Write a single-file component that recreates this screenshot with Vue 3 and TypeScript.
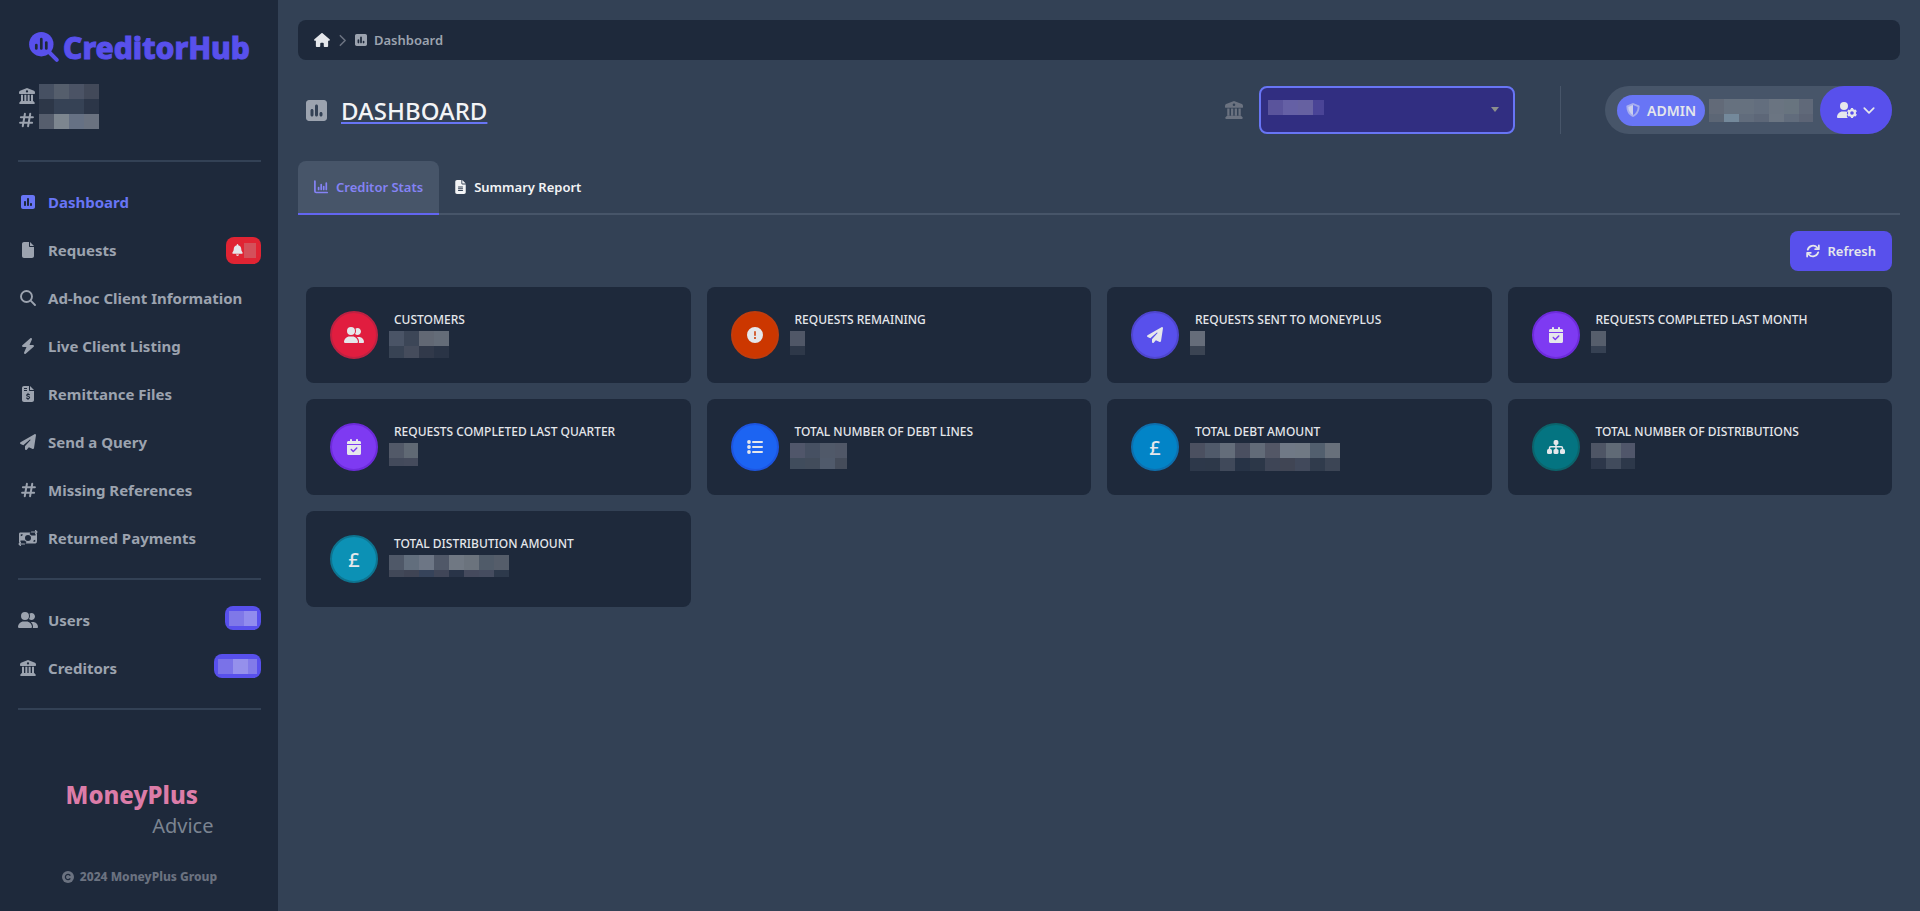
<script setup lang="ts">
import { h, type FunctionalComponent } from 'vue'

interface IconDef {
  w: number
  h: number
  body: string
}

interface MosaicDef {
  w: number
  h: number
  rows: string[][]
}

interface NavItem {
  label: string
  icon: string
  size: number
  active?: boolean
  alert?: MosaicDef
  count?: MosaicDef
}

interface StatCard {
  title: string
  icon?: string
  tone: string
  value: MosaicDef
}

const icons: Record<string, IconDef> = {
  poll: { w: 448, h: 448, body: '<path transform="translate(0 -32)" d="M64 32C28.7 32 0 60.7 0 96L0 416c0 35.3 28.7 64 64 64l320 0c35.3 0 64-28.7 64-64l0-320c0-35.3-28.7-64-64-64L64 32zm64 192c17.700 0 32 14.300 32 32l0 96c0 17.700-14.300 32-32 32s-32-14.300-32-32l0-96c0-17.700 14.300-32 32-32zm64-64c0-17.700 14.300-32 32-32s32 14.300 32 32l0 192c0 17.700-14.300 32-32 32s-32-14.300-32-32l0-192zM320 288c17.700 0 32 14.300 32 32l0 32c0 17.700-14.300 32-32 32s-32-14.300-32-32l0-32c0-17.700 14.300-32 32-32z"/>' },
  bank: { w: 32, h: 32, body: '<path fill-rule="evenodd" d="M16 0 30 5.500Q32 6.500 32 9v1.500q0 1.500-1.500 1.500h-29Q0 12 0 10.500V9Q0 6.500 2 5.500zM16 4.500a2.300 2.300 0 1 0 0 4.600 2.300 2.300 0 0 0 0-4.600z"/><path d="M4 13.500h4V26H4zm6.700 0h4V26h-4zm6.600 0h4V26h-4zm6.700 0h4V26h-4z"/><path d="M3.500 26h25l3 3.500q.5 2.500-1.500 2.500H2q-2 0-1.500-2.500z"/>' },
  hash: { w: 28, h: 30, body: '<path fill="none" stroke="currentColor" stroke-width="3.800" stroke-linecap="round" d="M11 3.500 7 26.500M21 3.500l-4 23M3.500 10H26M2 20h22.500"/>' },
  file: { w: 384, h: 512, body: '<path d="M0 64C0 28.700 28.700 0 64 0L224 0l0 128c0 17.700 14.300 32 32 32l128 0 0 288c0 35.300-28.700 64-64 64L64 512c-35.300 0-64-28.700-64-64L0 64zm384 64l-128 0L256 0 384 128z"/>' },
  fileLines: { w: 384, h: 512, body: '<path fill-rule="evenodd" d="M0 64C0 28.700 28.700 0 64 0L224 0l0 128c0 17.700 14.300 32 32 32l128 0 0 288c0 35.300-28.700 64-64 64L64 512c-35.300 0-64-28.700-64-64L0 64zm384 64l-128 0L256 0 384 128zM112 240a16 16 0 0 0 0 32h160a16 16 0 0 0 0-32zm0 64a16 16 0 0 0 0 32h160a16 16 0 0 0 0-32zm0 64a16 16 0 0 0 0 32h160a16 16 0 0 0 0-32z"/>' },
  invoice: { w: 384, h: 512, body: '<path fill-rule="evenodd" d="M0 64C0 28.700 28.700 0 64 0L224 0l0 128c0 17.700 14.300 32 32 32l128 0 0 288c0 35.300-28.700 64-64 64L64 512c-35.300 0-64-28.700-64-64L0 64zm384 64l-128 0L256 0 384 128zM64 64v32h96V64zm0 64v32h96v-32z"/><path class="cut" fill="none" stroke-width="34" stroke-linecap="round" d="M240 278c-20-12-92-22-92 20 0 44 96 22 96 70 0 42-70 34-100 16M192 232v30M192 400v34"/>' },
  search: { w: 16, h: 16, body: '<g fill="none" stroke="currentColor" stroke-width="1.900" stroke-linecap="round"><circle cx="6.500" cy="6.500" r="5.500"/><path d="m10.700 10.700 4.300 4.300"/></g>' },
  bolt: { w: 384, h: 512, body: '<path transform="translate(-32 0)" d="M349.400 44.600c5.900-13.700 1.500-29.700-10.600-38.500s-28.600-8-39.900 1.800l-256 224c-10 8.800-13.600 22.900-8.900 35.300S50.700 288 64 288l111.500 0L98.600 467.400c-5.900 13.700-1.500 29.700 10.600 38.500s28.600 8 39.900-1.800l256-224c10-8.800 13.600-22.900 8.900-35.300s-16.600-20.700-30-20.700l-111.500 0L349.400 44.600z"/>' },
  plane: { w: 512, h: 512, body: '<path d="M498.100 5.600c10.100 7 15.400 19.100 13.500 31.200l-64 416c-1.500 9.700-7.400 18.200-16 23s-18.900 5.400-28 1.600L284 427.700l-68.500 74.100c-8.900 9.700-22.900 12.900-35.200 8.100S160 493.200 160 480l0-83.600c0-4 1.500-7.800 4.200-10.800L331.800 202.800c5.800-6.300 5.600-16-.4-22s-15.700-6.400-22-.7L106 360.800 17.700 316.600C7.100 311.300 .3 300.700 0 288.900s5.900-22.800 16.100-28.700l448-256c10.700-6.100 23.900-5.500 34 1.400z"/>' },
  transfer: { w: 40, h: 32, body: '<path fill-rule="evenodd" d="M4 5h21l-2 3 4 3h8V8l3-2v16q0 4-3 5H15l2-3-4-3H5v3l-3 2V8q0-3 2-3zM20 10a6 6 0 1 0 0 12 6 6 0 0 0 0-12zM5.500 8.500v4q4 0 4-4zm29 15v-4q-4 0-4 4z"/><path fill="none" stroke="currentColor" stroke-width="2.200" stroke-linecap="round" stroke-linejoin="round" d="M27 4h11m-3-3 3 3-3 3M13 28H2m3-3-3 3 3 3"/>' },
  bell: { w: 448, h: 512, body: '<path d="M224 0c-17.700 0-32 14.300-32 32l0 19.200C119 66 64 130.600 64 208l0 18.800c0 47-17.300 92.400-48.500 127.600l-7.400 8.300c-8.400 9.400-10.400 22.900-5.300 34.400S19.400 416 32 416l384 0c12.600 0 24-7.400 29.200-18.900s3.100-25-5.300-34.400l-7.400-8.300C401.300 319.200 384 273.900 384 226.800l0-18.800c0-77.400-55-142-128-156.800L256 32c0-17.700-14.300-32-32-32zm45.300 493.300c12-12 18.700-28.300 18.700-45.300l-64 0-64 0c0 17 6.700 33.300 18.700 45.300s28.300 18.700 45.300 18.700s33.300-6.700 45.300-18.700z"/>' },
  users: { w: 640, h: 512, body: '<path d="M96 128a128 128 0 1 1 256 0A128 128 0 1 1 96 128zM0 482.300C0 383.800 79.800 304 178.300 304l91.400 0C368.200 304 448 383.800 448 482.300c0 16.400-13.300 29.700-29.700 29.700L29.700 512C13.300 512 0 498.700 0 482.300zM609.300 512l-137.800 0c5.400-9.400 8.600-20.300 8.600-32l0-8c0-60.700-27.100-115.200-69.800-151.800c2.400-.1 4.700-.2 7.100-.2l61.400 0C567.800 320 640 392.200 640 481.300c0 17-13.800 30.700-30.700 30.700zM432 256c-31 0-59-12.600-79.300-32.900C372.400 196.500 384 163.600 384 128c0-26.800-6.600-52.100-18.300-74.300C384.300 40.100 407.200 32 432 32c61.900 0 112 50.100 112 112s-50.100 112-112 112z"/>' },
  calendar: { w: 448, h: 512, body: '<path d="M128 0c17.700 0 32 14.300 32 32l0 32 128 0 0-32c0-17.700 14.300-32 32-32s32 14.300 32 32l0 32 48 0c26.500 0 48 21.500 48 48l0 48L0 160l0-48C0 85.500 21.500 64 48 64l48 0 0-32c0-17.700 14.300-32 32-32zM0 192l448 0 0 272c0 26.500-21.500 48-48 48L48 512c-26.500 0-48-21.500-48-48L0 192zM329 305c9.400-9.400 9.400-24.600 0-33.900s-24.600-9.400-33.900 0l-95 95-47-47c-9.400-9.400-24.600-9.400-33.900 0s-9.400 24.600 0 33.900l64 64c9.400 9.400 24.600 9.400 33.900 0L329 305z"/>' },
  alert: { w: 512, h: 512, body: '<path d="M256 512A256 256 0 1 0 256 0a256 256 0 1 0 0 512zm0-384c13.300 0 24 10.700 24 24l0 112c0 13.300-10.700 24-24 24s-24-10.700-24-24l0-112c0-13.300 10.700-24 24-24zM224 352a32 32 0 1 1 64 0 32 32 0 1 1 -64 0z"/>' },
  list: { w: 16, h: 16, body: '<circle cx="2" cy="3" r="1.900"/><circle cx="2" cy="8" r="1.900"/><circle cx="2" cy="13" r="1.900"/><path fill="none" stroke="currentColor" stroke-width="2" stroke-linecap="round" d="M6 3h9M6 8h9M6 13h9"/>' },
  sitemap: { w: 18, h: 16, body: '<path fill="none" stroke="currentColor" stroke-width="1.500" d="M9 4v7M2.500 11V9q0-1.200 1.200-1.200h10.600q1.200 0 1.200 1.200v2"/><rect x="6.600" y="1" width="4.800" height="5" rx="1.800"/><rect x="0" y="10" width="5" height="5" rx="1.600"/><rect x="6.500" y="10" width="5" height="5" rx="1.600"/><rect x="13" y="10" width="5" height="5" rx="1.600"/>' },
  home: { w: 576, h: 512, body: '<path d="M575.800 255.500c0 18-15 32.100-32 32.100l-32 0 .7 160.200c0 2.700-.2 5.400-.5 8.100l0 16.200c0 22.100-17.900 40-40 40l-16 0-9.500 0L416 512l-24 0c-22.100 0-40-17.900-40-40l0-24 0-64c0-17.700-14.300-32-32-32l-64 0c-17.700 0-32 14.300-32 32l0 64 0 24c0 22.100-17.900 40-40 40l-80 0c-22.100 0-40-17.900-40-40l0-184.500-32 0c-18 0-32-14-32-32.100c0-9 3-17 10-24L266.400 8c7-7 15-8 22-8s15 2 21 7L564.800 231.500c8 7 12 15 11 24z"/>' },
  chevronRight: { w: 8, h: 14, body: '<path fill="none" stroke="currentColor" stroke-width="1.800" stroke-linecap="round" stroke-linejoin="round" d="m1.500 1.500 5.500 5.500-5.500 5.500"/>' },
  chevronDown: { w: 14, h: 8, body: '<path fill="none" stroke="currentColor" stroke-width="2" stroke-linecap="round" stroke-linejoin="round" d="m1.500 1.200 5.500 5.500 5.500-5.500"/>' },
  chart: { w: 14, h: 14, body: '<path fill="none" stroke="currentColor" stroke-width="1.700" stroke-linecap="round" stroke-linejoin="round" d="M.9 1.200v10q0 1.300 1.300 1.300h11M4.600 7.500v2M7.200 4.500v5M9.700 6.500v3M12.300 3v6.500"/>' },
  refresh: { w: 16, h: 16, body: '<path fill="none" stroke="currentColor" stroke-width="2" stroke-linecap="round" stroke-linejoin="round" d="M2 6.500A6.300 6.300 0 0 1 12.800 4l1.700 1.700M14.700 1.700v4.200h-4.200M14 9.500A6.300 6.300 0 0 1 3.200 12l-1.700-1.700M1.300 14.300v-4.200h4.200"/>' },
  shield: { w: 14, h: 14, body: '<path opacity=".5" d="m7 0 6.100 2.500q.5.3.5.900C13.400 8.500 11.400 12 7 14 2.600 12 .6 8.500.4 3.400q0-.6.500-.9z"/><path opacity=".6" d="m7 1.900-4.700 2C2.500 7.700 4.100 10.300 7 12z"/><path class="role-cut" d="m7 1.900 4.700 2C11.500 7.700 9.900 10.300 7 12z" fill="#6875f5"/>' },
  userGear: { w: 20, h: 16, body: '<circle cx="7" cy="4" r="4"/><path d="M0 15.100C0 12 2.500 9.500 5.600 9.500h2.800q1 0 1.800.3-.6 1.700 0 3.200l-.5 1 1 2H.9Q0 16 0 15.100z"/><circle cx="15" cy="11" r="2.900" fill="none" stroke="currentColor" stroke-width="2.200"/><path fill="none" stroke="currentColor" stroke-width="2.200" d="M15 6v1.500M15 14.500V16M10.700 8.500l1.300.8M18 12.700l1.300.8M10.700 13.500l1.300-.8M18 9.300l1.300-.8"/>' },
  copyright: { w: 16, h: 16, body: '<path fill-rule="evenodd" d="M8 0a8 8 0 1 0 0 16A8 8 0 0 0 8 0z"/><path class="cut" fill="none" stroke-width="1.700" stroke-linecap="round" d="M10.600 5.600a3.500 3.500 0 1 0 0 4.800"/>' },
  brand: { w: 30, h: 30, body: '<path fill="none" stroke="currentColor" stroke-width="4" stroke-linecap="round" d="m19.500 19.500 8.300 8.300"/><circle cx="12.300" cy="12.200" r="12.200"/><path class="cut" fill="none" stroke-width="2.700" stroke-linecap="round" d="M7.300 13v3.500M12.300 7.200v9.300M17.300 10.500v6"/>' },
}

const Icon: FunctionalComponent<{ name: string; size: number }> = (props) => {
  const def = icons[props.name]
  return h('svg', {
    class: 'icon',
    viewBox: `0 0 ${def.w} ${def.h}`,
    height: props.size,
    width: Math.round((props.size * def.w) / def.h),
    'aria-hidden': 'true',
    innerHTML: def.body,
  })
}
Icon.props = ['name', 'size']

const CELL = 15

// Hidden figures are shown as a mosaic of flat cells; the last row and column are clipped.
const Mosaic: FunctionalComponent<{ def: MosaicDef }> = ({ def }) =>
  h(
    'svg',
    { class: 'mosaic', width: def.w, height: def.h, viewBox: `0 0 ${def.w} ${def.h}`, 'aria-hidden': 'true' },
    def.rows.flatMap((row, y) =>
      row.map((fill, x) => h('rect', { x: x * CELL, y: y * CELL, width: CELL, height: CELL, fill })),
    ),
  )
Mosaic.props = ['def']

const mosaic = (w: number, height: number, ...rows: string[]): MosaicDef => ({
  w,
  h: height,
  rows: rows.map((r) => r.split(' ').map((c) => `#${c}`)),
})

const account = mosaic(60, 45, '465062 555e6c 4b5365 424959', '2d3748 364255 364255 2c3648', '565e6d 7d868f 667184 6a7280')
const creditor = mosaic(56, 15, '5a549c 6560a5 6661a1 4a4496')
const userName = mosaic(104, 23, '626a78 66717f 66717f 636e7e 6a7481 68747f 606979', '5c6675 74899b 616c7c 5d6778 6b7582 616c7c 5c6475')

const mainNav: NavItem[] = [
  { label: 'Dashboard', icon: 'poll', size: 14, active: true },
  { label: 'Requests', icon: 'file', size: 16, alert: mosaic(12, 15, 'd4505a') },
  { label: 'Ad-hoc Client Information', icon: 'search', size: 16 },
  { label: 'Live Client Listing', icon: 'bolt', size: 16 },
  { label: 'Remittance Files', icon: 'invoice', size: 16 },
  { label: 'Send a Query', icon: 'plane', size: 16 },
  { label: 'Missing References', icon: 'hash', size: 16 },
  { label: 'Returned Payments', icon: 'transfer', size: 16 },
]

const adminNav: NavItem[] = [
  { label: 'Users', icon: 'users', size: 16, count: mosaic(28, 15, '7f78e8 918cee') },
  { label: 'Creditors', icon: 'bank', size: 16, count: mosaic(39, 15, '7a72e8 9590ec 827be9') },
]

const stats: StatCard[] = [
  { title: 'Customers', icon: 'users', tone: 'rose', value: mosaic(60, 27, '4a5466 3c4657 626874 646c78', '384354 454c5c 31394a 2a3446') },
  { title: 'Requests Remaining', icon: 'alert', tone: 'orange', value: mosaic(15, 24, '505767', '2e3849') },
  { title: 'Requests Sent to MoneyPlus', icon: 'plane', tone: 'indigo', value: mosaic(15, 24, '666d7a', '3b4453') },
  { title: 'Requests Completed Last Month', icon: 'calendar', tone: 'violet', value: mosaic(15, 22, '565e6c', '364153') },
  { title: 'Requests Completed Last Quarter', icon: 'calendar', tone: 'violet', value: mosaic(29, 23, '525968 606974', '434a5b 454b5c') },
  { title: 'Total Number of Debt Lines', icon: 'list', tone: 'blue', value: mosaic(57, 26, '50566a 465062 505969 505767', '404c5c 424c5b 505a6b 454c5a') },
  { title: 'Total Debt Amount', tone: 'sky', value: mosaic(150, 28, '4b5060 505a6a 646d7a 4a4f60 626b78 535766 707986 707984 525f6e 68707b', '2d384a 2d3849 40495a 273346 2c3748 3e4556 404554 41495b 303b4c 3c4555') },
  { title: 'Total Number of Distributions', icon: 'sitemap', tone: 'teal', value: mosaic(44, 26, '4e5565 606a76 50566a', '2d374a 414b5c 2d384a') },
  { title: 'Total Distribution Amount', tone: 'cyan', value: mosaic(120, 22, '4f5868 626e7d 6d7685 505868 707883 6b737d 505b69 555d6a', '414858 3f4454 36435a 404658 293448 454a5d 454c5f 2d394b') },
]
</script>

<template>
  <div class="app">
    <aside class="sidebar">
      <a class="logo" href="#"><Icon name="brand" :size="30" /><span>CreditorHub</span></a>
      <div class="account">
        <div class="account-icons"><Icon name="bank" :size="16" /><Icon name="hash" :size="16" /></div>
        <Mosaic :def="account" />
      </div>

      <nav v-for="(group, g) in [mainNav, adminNav]" :key="g" class="nav">
        <a v-for="item in group" :key="item.label" href="#" class="nav-item" :class="{ active: item.active }">
          <span class="nav-icon"><Icon :name="item.icon" :size="item.size" /></span>
          <span class="nav-label">{{ item.label }}</span>
          <span v-if="item.alert" class="badge badge-alert"><Icon name="bell" :size="12" /><Mosaic :def="item.alert" /></span>
          <span v-if="item.count" class="badge badge-count"><Mosaic :def="item.count" /></span>
        </a>
      </nav>

      <footer class="footer">
        <div class="company"><strong>MoneyPlus</strong><span>Advice</span></div>
        <p class="legal"><Icon name="copyright" :size="12" />2024 MoneyPlus Group</p>
      </footer>
    </aside>

    <main class="main">
      <nav class="breadcrumb" aria-label="Breadcrumb">
        <a href="#" class="crumb-home" aria-label="Home"><Icon name="home" :size="14" /></a>
        <Icon class="crumb-sep" name="chevronRight" :size="13" />
        <a href="#" class="crumb"><Icon name="poll" :size="12" />Dashboard</a>
      </nav>

      <header class="header">
        <Icon class="title-icon" name="poll" :size="21" />
        <h1>DASHBOARD</h1>
        <label class="picker-label" for="creditor" aria-label="Creditor"><Icon name="bank" :size="18" /></label>
        <div class="picker">
          <select id="creditor"><option></option></select>
          <Mosaic class="picker-value" :def="creditor" />
        </div>
        <div class="user">
          <span class="role"><Icon name="shield" :size="14" />ADMIN</span>
          <Mosaic :def="userName" />
          <button type="button" class="user-menu" aria-label="User menu">
            <Icon name="userGear" :size="16" /><Icon name="chevronDown" :size="7" />
          </button>
        </div>
      </header>

      <div class="tabs" role="tablist">
        <button type="button" class="tab selected" role="tab" aria-selected="true"><Icon name="chart" :size="14" />Creditor Stats</button>
        <button type="button" class="tab" role="tab" aria-selected="false"><Icon name="fileLines" :size="14" />Summary Report</button>
      </div>

      <section class="panel">
        <button type="button" class="refresh"><Icon name="refresh" :size="14" />Refresh</button>
        <div class="cards">
          <article v-for="card in stats" :key="card.title" class="card">
            <span class="disc" :class="card.tone"><Icon v-if="card.icon" :name="card.icon" :size="16" /><template v-else>£</template></span>
            <div class="card-body">
              <h2>{{ card.title }}</h2>
              <Mosaic :def="card.value" />
            </div>
          </article>
        </div>
      </section>
    </main>
  </div>
</template>

<style>
body {
  margin: 0;
  background: #334155;
}
.icon {
  display: block;
  flex: none;
  fill: currentColor;
  overflow: visible;
}
.icon .cut {
  stroke: #1e293b;
}
.mosaic {
  display: block;
  flex: none;
  shape-rendering: crispEdges;
}
</style>

<style scoped>
.app {
  display: flex;
  min-height: 100vh;
  font-family: "Noto Sans", "Open Sans", sans-serif;
  color: #e5e7eb;
}
.app *,
.app {
  box-sizing: border-box;
}
a {
  color: inherit;
  text-decoration: none;
}
button {
  font: inherit;
  border: 0;
  cursor: pointer;
}

.sidebar {
  flex: none;
  display: flex;
  flex-direction: column;
  width: 278px;
  padding: 0 17px 0 18px;
  background: #1e293b;
  color: #9ca3af;
}
.logo {
  display: flex;
  justify-content: center;
  align-items: center;
  gap: 4px;
  height: 84px;
  padding-top: 10px;
  color: #5850ec;
  font-size: 30px;
  font-weight: 800;
}
.logo span {
  -webkit-text-stroke: 1px #5850ec;
}
.account {
  display: flex;
  gap: 4px;
  height: 76px;
}
.account-icons {
  display: flex;
  flex-direction: column;
  align-items: center;
  gap: 8px;
  width: 17px;
  padding-top: 4px;
}
.nav {
  padding: 16px 0;
  border-top: 2px solid #334155;
}
.nav-item {
  display: flex;
  align-items: center;
  height: 48px;
  font-size: 15px;
  font-weight: 700;
}
.nav-item.active {
  color: #6875f5;
}
.nav-icon {
  display: flex;
  justify-content: center;
  width: 20px;
  margin-right: 10px;
}
.nav-label {
  white-space: nowrap;
}
.badge {
  display: flex;
  align-items: center;
  margin-left: auto;
  border-radius: 8px;
}
.badge-alert {
  gap: 1px;
  height: 27px;
  padding: 0 5px 0 6px;
  background: #e02433;
  color: #e5e7eb;
}
.badge-count {
  height: 24px;
  padding: 0 4px;
  margin-bottom: 4px;
  background: #5850ec;
}
.footer {
  display: flex;
  flex-direction: column;
  align-items: center;
  padding-top: 69px;
  border-top: 2px solid #334155;
}
.company {
  display: flex;
  flex-direction: column;
  width: 148px;
}
.company strong {
  color: #dc7ca8;
  font-size: 24px;
  font-weight: 800;
  line-height: 32px;
}
.company span {
  align-self: flex-end;
  color: #7b8491;
  font-size: 20px;
  line-height: 30px;
}
.legal {
  display: flex;
  align-items: center;
  gap: 6px;
  margin: 26px 0 0;
  color: #6b7280;
  font-size: 12px;
  font-weight: 800;
  line-height: 20px;
}

.main {
  flex: 1;
  min-width: 0;
  padding: 20px;
}
.breadcrumb {
  display: flex;
  align-items: center;
  gap: 9px;
  height: 40px;
  padding: 0 16px;
  border-radius: 8px;
  background: #1e293b;
}
.crumb-sep {
  color: #6b7280;
}
.crumb {
  display: flex;
  align-items: center;
  gap: 7px;
  color: #9ca3af;
  font-size: 13px;
  font-weight: 600;
}
.header {
  display: flex;
  align-items: center;
  height: 48px;
  margin: 26px 8px 27px;
}
.title-icon {
  color: #9ca3af;
}
h1 {
  margin: 0 auto 0 14px;
  padding-top: 2px;
  color: #f3f4f6;
  font-size: 24px;
  font-weight: 500;
  line-height: 32px;
  text-decoration: underline #6875f5 2px;
  text-decoration-skip-ink: none;
  text-underline-offset: 2px;
}
.picker-label {
  color: #6b7280;
}
.picker {
  position: relative;
  width: 256px;
  height: 48px;
  margin: 0 45px 0 16px;
}
.picker select {
  width: 100%;
  height: 100%;
  border: 2px solid #6875f5;
  border-radius: 8px;
  background: #312e81;
  appearance: none;
}
.picker::after {
  content: "";
  position: absolute;
  top: 21px;
  right: 16px;
  border: 4px solid transparent;
  border-top: 5px solid #8c8f8c;
  border-bottom: 0;
}
.picker-value {
  position: absolute;
  top: 14px;
  left: 9px;
}
.user {
  position: relative;
  display: flex;
  align-items: center;
  height: 48px;
  margin-left: 45px;
  padding-left: 12px;
  border-radius: 24px;
  background: #475569;
}
.user::before {
  content: "";
  position: absolute;
  left: -45px;
  width: 1px;
  height: 48px;
  background: #475569;
}
.role {
  display: flex;
  align-items: center;
  gap: 7px;
  height: 31px;
  margin-right: 4px;
  padding: 0 9px;
  border-radius: 16px;
  background: #6875f5;
  font-size: 14px;
  font-weight: 600;
}
.user-menu {
  display: flex;
  justify-content: center;
  align-items: center;
  gap: 6px;
  width: 72px;
  height: 48px;
  margin-left: 7px;
  padding: 0;
  border-radius: 24px;
  background: #5850ec;
  color: #e5e7eb;
}

.tabs {
  display: flex;
  border-bottom: 2px solid #475569;
}
.tab {
  display: flex;
  align-items: center;
  gap: 8px;
  height: 54px;
  margin-bottom: -2px;
  padding: 0 16px;
  border-bottom: 2px solid transparent;
  background: none;
  color: #f3f4f6;
  font-size: 13px;
  font-weight: 600;
}
.tab.selected {
  border-color: #6366f1;
  border-radius: 8px 8px 0 0;
  background: #475569;
  color: #8583f5;
}
.panel {
  display: flex;
  flex-direction: column;
  padding: 16px 8px;
}
.refresh {
  display: flex;
  align-items: center;
  align-self: flex-end;
  gap: 8px;
  height: 40px;
  padding: 0 16px;
  border-radius: 8px;
  background: #5850ec;
  color: #e5e7eb;
  font-size: 13px;
  font-weight: 600;
}
.cards {
  display: grid;
  grid-template-columns: repeat(4, 1fr);
  gap: 16px;
  margin-top: 16px;
}
.card {
  display: flex;
  gap: 11px;
  height: 96px;
  padding: 24px;
  border-radius: 8px;
  background: #1e293b;
}
.card-body {
  min-width: 0;
}
h2 {
  margin: 0 0 2px;
  padding-left: 5px;
  color: #e5e7eb;
  font-size: 12px;
  font-weight: 500;
  line-height: 18px;
  text-transform: uppercase;
  white-space: nowrap;
}
.disc {
  flex: none;
  display: flex;
  justify-content: center;
  align-items: center;
  width: 48px;
  height: 48px;
  border: 2px solid;
  border-radius: 50%;
  font-size: 20px;
  font-weight: 500;
}
.disc .icon,
.disc {
  color: #e5e7eb;
}
.disc.rose {
  border-color: #be2142;
  background: #e11d3f;
}
.disc.orange {
  border-color: #c23c0c;
  background: #cc3700;
}
.disc.indigo {
  border-color: #4f46cf;
  background: #5850ec;
}
.disc.violet {
  border-color: #6d2bdb;
  background: #7e3af2;
}
.disc.blue {
  border-color: #1d55e0;
  background: #1c64f2;
}
.disc.sky {
  border-color: #0e6fae;
  background: #0284c7;
}
.disc.teal {
  border-color: #0b646c;
  background: #047481;
}
.disc.cyan {
  border-color: #0e7490;
  background: #0c91b5;
}
</style>
